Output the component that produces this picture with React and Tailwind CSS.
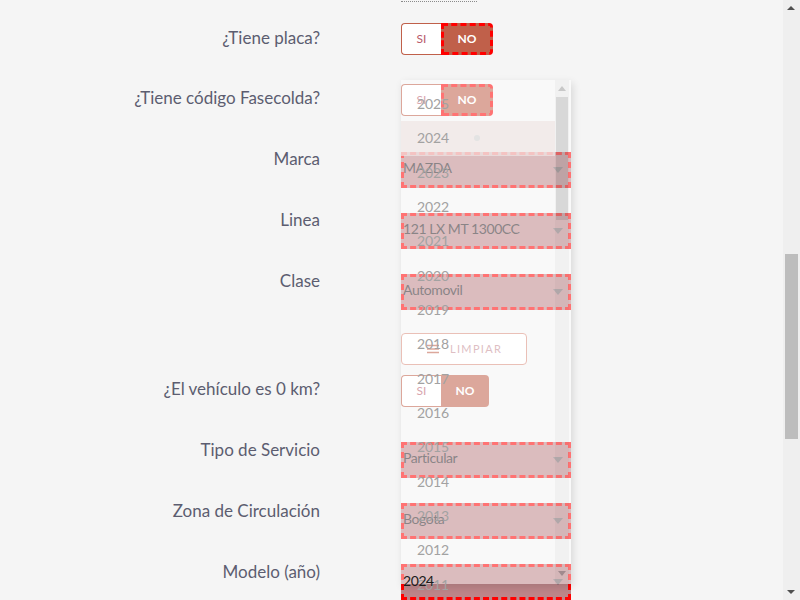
import React from "react";

const FONT = { fontFamily: "Lato, 'Noto Sans', sans-serif" };

function Toggle({ w = "w-[92px]", dashed = true }) {
  return (
    <div className={`flex h-8 ${w}`}>
      <div className="flex w-10 items-center justify-center rounded-l border border-r-0 border-[#c0604a] bg-white text-[12px] text-[#b85a6a]">
        SI
      </div>
      <div
        className={`flex flex-1 items-center justify-center rounded-r bg-[#c0604a] text-[12px] font-bold text-white ${
          dashed ? "border-[3px] border-dashed border-[#ff0000]" : ""
        }`}
      >
        NO
      </div>
    </div>
  );
}

function Caret({ className = "" }) {
  return (
    <svg width="10" height="6" viewBox="0 0 10 6" className={className}>
      <path d="M0 0 L10 0 L5 6 Z" fill="#7a6a6e" />
    </svg>
  );
}

function Select({ value, top = false }) {
  return (
    <div className="relative flex h-[36px] w-[170px] items-center border-[3px] border-dashed border-[#ff0000] bg-[#bd8589] text-[14px] tracking-[-0.03em] text-[#2a2024]">
      <span className={top ? "relative z-10 -ml-[1px] -translate-y-[2px] text-[#1c1c1c]" : "-ml-[1px] -translate-y-[3px]"}>
        {value}
      </span>
      <Caret className="absolute right-[5px] top-1/2 -translate-y-1/2" />
    </div>
  );
}

function Row({ label, labelMt = "mt-[17px]", ctrlMt, h = "h-[61px]", children }) {
  return (
    <div className={`flex ${h}`}>
      <div className={`w-[320px] text-right text-[17px] leading-6 text-[#5c5d70] ${labelMt}`}>{label}</div>
      <div className={`ml-[81px] ${ctrlMt}`}>{children}</div>
    </div>
  );
}

const YEARS = [2025, 2024, 2023, 2022, 2021, 2020, 2019, 2018, 2017, 2016, 2015, 2014, 2013, 2012, 2011];

export default function App() {
  return (
    <div className="relative h-[600px] w-[800px] overflow-hidden bg-[#f5f5f5]" style={FONT}>
      <div className="flex flex-col">
        <div className="h-[8px]">
          <div className="ml-[401px] mt-[1px] w-[76px] border-t border-dotted border-[#8a8a8a]" />
        </div>
        <Row label="¿Tiene placa?" labelMt="mt-[18px]" ctrlMt="mt-[15px]">
          <Toggle />
        </Row>
        <Row label="¿Tiene código Fasecolda?" ctrlMt="mt-[15px]">
          <Toggle />
        </Row>
        <Row label="Marca" ctrlMt="mt-[22px]">
          <Select value="MAZDA" />
        </Row>
        <Row label="Linea" ctrlMt="mt-[22px]">
          <Select value="121 LX MT 1300CC" />
        </Row>
        <Row label="Clase" ctrlMt="mt-[22px]">
          <Select value="Automovil" />
        </Row>
        <div className="h-[47px]">
          <div className="ml-[401px] mt-[20px] flex h-8 w-[126px] items-center rounded border border-[#d98c7c] bg-white">
            <svg width="12" height="10" viewBox="0 0 12 10" className="ml-[25px]">
              <path d="M0 1.5 H12 M0 5 H12 M0 8.5 H12" stroke="#c0604a" strokeWidth="1.3" />
            </svg>
            <span className="ml-[11px] text-[11px] tracking-[0.12em] text-[#c48a92]">LIMPIAR</span>
          </div>
        </div>
        <Row label="¿El vehículo es 0 km?" ctrlMt="mt-[15px]">
          <Toggle w="w-[88px]" dashed={false} />
        </Row>
        <Row label="Tipo de Servicio" ctrlMt="mt-[21px]">
          <Select value="Particular" />
        </Row>
        <Row label="Zona de Circulación" ctrlMt="mt-[21px]">
          <Select value="Bogota" />
        </Row>
        <Row label="Modelo (año)" ctrlMt="mt-[21px]">
          <Select value="2024" top />
        </Row>
      </div>

      {/* open year list */}
      <div className="absolute left-[401px] top-[80px] h-[504px] w-[170px] bg-white/45 shadow-[2px_3px_8px_rgba(0,0,0,0.12)]">
        <div className="w-[154px] pt-[7px]">
          {YEARS.map((y) => (
            <div
              key={y}
              className={`h-[34.33px] pl-[16px] text-[14px] tracking-[-0.01em] leading-[34.33px] text-[#a2a2a2] ${
                y === 2024 ? "bg-[#efe6e4]/70" : ""
              }`}
            >
              {y}
            </div>
          ))}
        </div>
        <div className="absolute left-[73px] top-[55px] h-[6px] w-[6px] rounded-full bg-[#e3e3e3]" />
        <div className="absolute right-[2px] top-0 h-full w-[14px] bg-black/[0.03]">
          <svg width="8" height="5" viewBox="0 0 8 5" className="absolute left-[3px] top-[6px]">
            <path d="M0 5 L8 5 L4 0 Z" fill="#c8c8c8" />
          </svg>
          <div className="absolute left-[1px] top-[17px] h-[123px] w-[12px] bg-black/[0.1]" />
          <svg width="8" height="5" viewBox="0 0 8 5" className="absolute left-[3px] top-[491px]">
            <path d="M0 0 L8 0 L4 5 Z" fill="#a08a8e" />
          </svg>
        </div>
      </div>

      {/* page scrollbar */}
      <div className="absolute right-0 top-0 h-[600px] w-[17px] bg-[#efefef]">
        <svg width="8" height="4" viewBox="0 0 8 4" className="absolute left-[4px] top-[6px]">
          <path d="M0 4 L8 4 L4 0 Z" fill="#505050" />
        </svg>
        <div className="absolute left-[2px] top-[254px] h-[185px] w-[13px] bg-[#bdbdbd]" />
        <svg width="8" height="4" viewBox="0 0 8 4" className="absolute bottom-[6px] left-[4px]">
          <path d="M0 0 L8 0 L4 4 Z" fill="#505050" />
        </svg>
      </div>
    </div>
  );
}
